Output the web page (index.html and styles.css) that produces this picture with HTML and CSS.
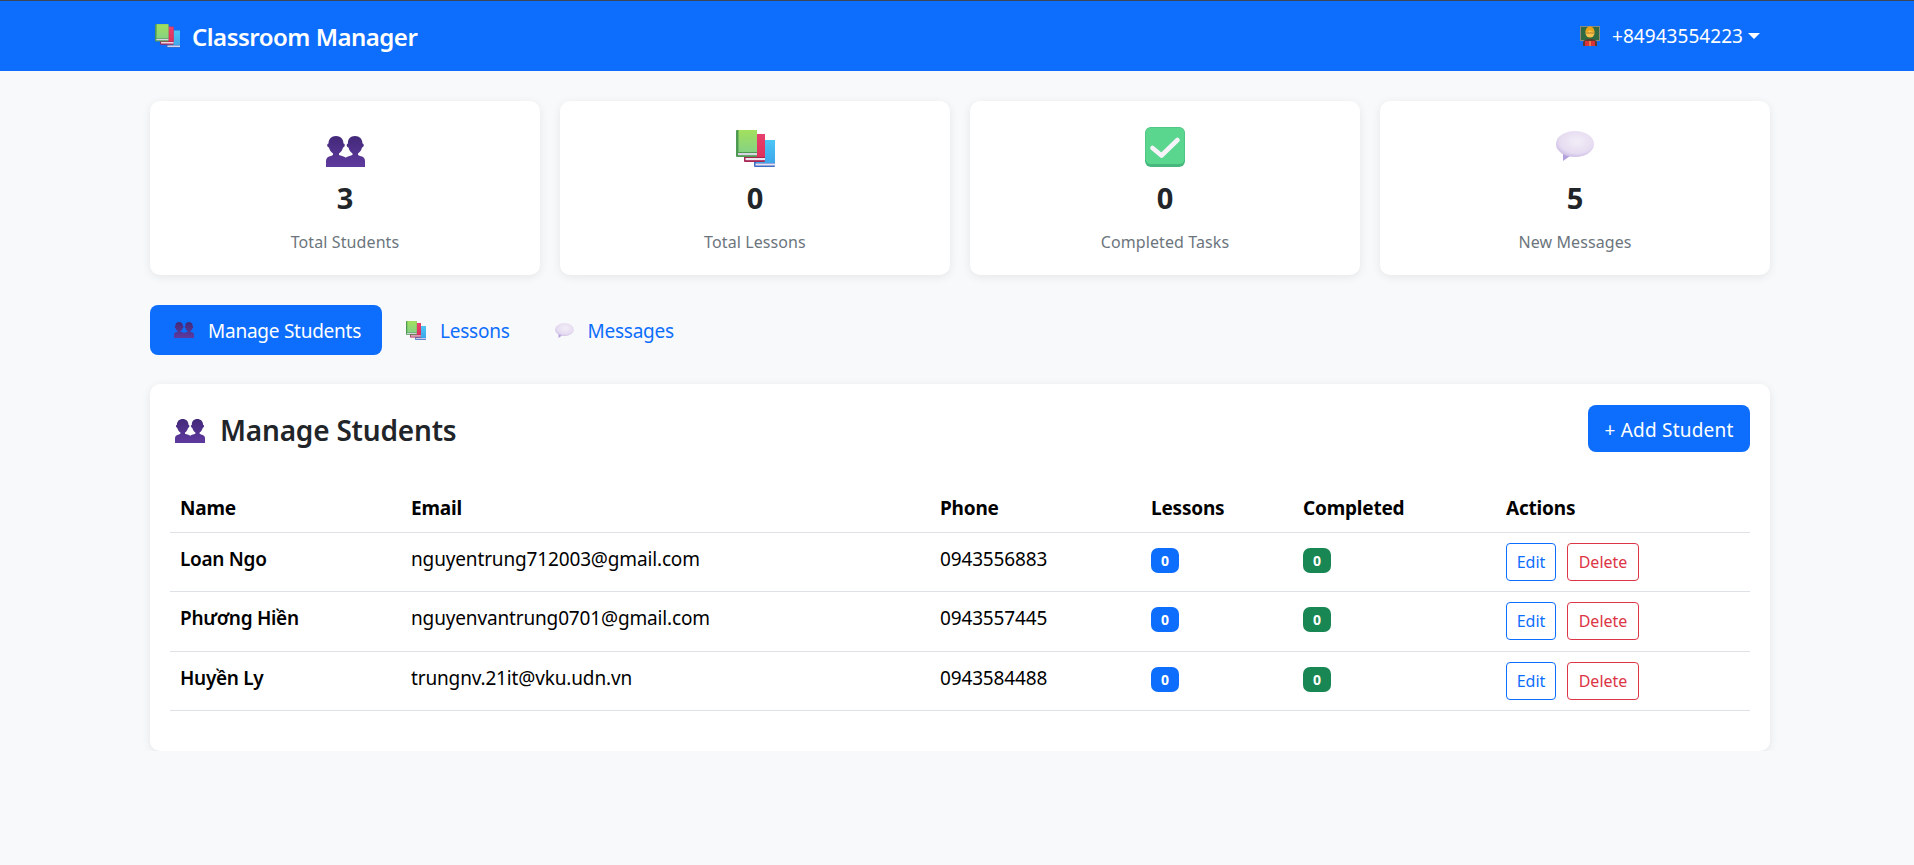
FILE: index.html
```html
<!DOCTYPE html>
<html lang="vi">
<head>
<meta charset="utf-8">
<title>Classroom Manager</title>
<link rel="stylesheet" href="styles.css">
</head>
<body>
<svg class="defs" width="0" height="0" aria-hidden="true">
  <defs>
    <linearGradient id="gp" x1="0" y1="0" x2="0" y2="1"><stop offset="0" stop-color="#43297a"/><stop offset="1" stop-color="#5f3a9e"/></linearGradient>
    <linearGradient id="gg" x1="0" y1="0" x2="0" y2="1"><stop offset="0" stop-color="#a2e05c"/><stop offset="1" stop-color="#86d283"/></linearGradient>
    <linearGradient id="gr" x1="0" y1="0" x2="0" y2="1"><stop offset="0" stop-color="#e8406f"/><stop offset="1" stop-color="#e0305a"/></linearGradient>
    <linearGradient id="gb" x1="0" y1="0" x2="0" y2="1"><stop offset="0" stop-color="#4cc6f6"/><stop offset="1" stop-color="#3fa6ea"/></linearGradient>
    <radialGradient id="gm" cx=".55" cy=".4" r=".65"><stop offset="0" stop-color="#f2edf7"/><stop offset=".7" stop-color="#e6dcf1"/><stop offset="1" stop-color="#c6b6e2"/></radialGradient>
    <symbol id="i-people" viewBox="0 0 39 31">
      <g fill="url(#gp)">
        <path d="M0 31V25c0-3 2-4.500 5-5l2-1v-1.500C5 16 3.500 14 3 11.500 1 11 .5 8 2.500 7.500 2.500 3 5.500 0 10 0s7.500 3 7.500 7.500c2 .5 1.500 3.500-.5 4-.5 2.500-2 4.500-4 6V19l3 1c2 .5 4 1 4 2.500V31z"/>
        <path d="M19.500 31V22.500c0-1.500 2-2 4-2.500l3-1v-1.500c-2-1.500-3.500-3.500-4-6-2-.5-2.500-3.500-.5-4C21.500 3 24.500 0 29 0s7.500 3 7.500 7.500c2 .5 1.500 3.500-.5 4-.5 2.500-2 4.500-4 6V19l2 1c3 .5 5 2 5 5v6z"/>
      </g>
    </symbol>
    <symbol id="i-books" viewBox="0 0 39 37">
      <rect x="18" y="10" width="21" height="27" rx="1" fill="#3f6fc4"/>
      <rect x="20" y="10" width="19" height="23" fill="url(#gb)"/>
      <rect x="19.500" y="33.500" width="19.500" height="2" fill="#e8e2f2"/>
      <rect x="8" y="4" width="21" height="28" rx="1" fill="#a82452"/>
      <rect x="10" y="4" width="19" height="23" fill="url(#gr)"/>
      <rect x="9.500" y="28" width="19.500" height="2.200" fill="#efe5ee"/>
      <rect x="0" y="0" width="21" height="27" rx="1" fill="#4f9a52"/>
      <rect x="2.500" y="0" width="18.500" height="22" fill="url(#gg)"/>
      <rect x="2" y="23" width="19" height="2.200" fill="#d9d5e6"/>
    </symbol>
    <symbol id="i-check" viewBox="0 0 40 40">
      <rect width="40" height="40" rx="6" fill="#46b87d"/>
      <rect x=".5" y=".5" width="39" height="36.500" rx="5.500" fill="#5bd68f"/>
      <path d="M7.500 21l9 7.500L32.500 13" fill="none" stroke="#f6f3f9" stroke-width="4.600" stroke-linecap="round" stroke-linejoin="round"/>
    </symbol>
    <symbol id="i-bubble" viewBox="0 0 38 30">
      <path d="M7 20v10l7-5z" fill="#b3a0dc"/>
      <ellipse cx="19" cy="13" rx="19" ry="13" fill="url(#gm)"/>
    </symbol>
    <symbol id="i-teacher" viewBox="0 0 20 20">
      <rect width="20" height="15" fill="#8d8a7c"/>
      <rect x="1" y="1" width="18" height="13" fill="#2e6b45"/>
      <path d="M3 20v-3c0-3 3-4 7-4s7 1 7 4v3z" fill="#5a3a2e"/>
      <rect x="5" y="15" width="10" height="5" fill="#d8323a"/>
      <rect x="9.500" y="15" width="1" height="5" fill="#f5c24a"/>
      <circle cx="10" cy="7" r="4.500" fill="#f8c24e"/>
      <path d="M5.500 6C5.500 2 8 .5 10 .5S14.500 2 14.500 6c-2 0-3-1-4.500-2-1 1-2.500 2-4.500 2z" fill="#e8a21c"/>
      <rect x="6" y="6.500" width="8" height="1" fill="#b07a20"/>
    </symbol>
  </defs>
</svg>

<header class="navbar">
  <div class="wrap nav-inner">
    <a class="brand" href="#">
      <svg class="ico ico-brand"><use href="#i-books"/></svg>
      <span>Classroom Manager</span>
    </a>
    <a class="user" href="#">
      <svg class="ico ico-user"><use href="#i-teacher"/></svg>
      <span>+84943554223</span>
      <span class="caret"></span>
    </a>
  </div>
</header>

<main class="wrap page">
  <section class="stats">
    <div class="stat">
      <div class="stat-icon"><svg class="ico s-people"><use href="#i-people"/></svg></div>
      <div class="stat-num">3</div>
      <div class="stat-label">Total Students</div>
    </div>
    <div class="stat">
      <div class="stat-icon"><svg class="ico s-books"><use href="#i-books"/></svg></div>
      <div class="stat-num">0</div>
      <div class="stat-label">Total Lessons</div>
    </div>
    <div class="stat">
      <div class="stat-icon"><svg class="ico s-check"><use href="#i-check"/></svg></div>
      <div class="stat-num">0</div>
      <div class="stat-label">Completed Tasks</div>
    </div>
    <div class="stat">
      <div class="stat-icon"><svg class="ico s-bubble"><use href="#i-bubble"/></svg></div>
      <div class="stat-num">5</div>
      <div class="stat-label">New Messages</div>
    </div>
  </section>

  <nav class="tabs">
    <a class="tab active" href="#"><svg class="ico t-people"><use href="#i-people"/></svg><span>Manage Students</span></a>
    <a class="tab" href="#"><svg class="ico t-books"><use href="#i-books"/></svg><span>Lessons</span></a>
    <a class="tab" href="#"><svg class="ico t-bubble"><use href="#i-bubble"/></svg><span>Messages</span></a>
  </nav>

  <section class="panel">
    <div class="panel-head">
      <h2 class="panel-title"><svg class="ico h-people"><use href="#i-people"/></svg><span>Manage Students</span></h2>
      <button class="btn-add">+ Add Student</button>
    </div>
    <table class="table">
      <colgroup>
        <col class="c1"><col class="c2"><col class="c3"><col class="c4"><col class="c5"><col class="c6">
      </colgroup>
      <thead>
        <tr><th>Name</th><th>Email</th><th>Phone</th><th>Lessons</th><th>Completed</th><th>Actions</th></tr>
      </thead>
      <tbody>
        <tr>
          <td class="name">Loan Ngo</td><td>nguyentrung712003@gmail.com</td><td>0943556883</td>
          <td class="bcell"><span class="badge blue">0</span></td><td class="bcell"><span class="badge green">0</span></td>
          <td class="acell"><div class="actions"><button class="btn edit">Edit</button><button class="btn del">Delete</button></div></td>
        </tr>
        <tr>
          <td class="name">Phương Hiền</td><td>nguyenvantrung0701@gmail.com</td><td>0943557445</td>
          <td class="bcell"><span class="badge blue">0</span></td><td class="bcell"><span class="badge green">0</span></td>
          <td class="acell"><div class="actions"><button class="btn edit">Edit</button><button class="btn del">Delete</button></div></td>
        </tr>
        <tr>
          <td class="name">Huyền Ly</td><td>trungnv.21it@vku.udn.vn</td><td>0943584488</td>
          <td class="bcell"><span class="badge blue">0</span></td><td class="bcell"><span class="badge green">0</span></td>
          <td class="acell"><div class="actions"><button class="btn edit">Edit</button><button class="btn del">Delete</button></div></td>
        </tr>
      </tbody>
    </table>
  </section>
</main>
</body>
</html>
```
FILE: styles.css
```css
* { box-sizing: border-box; }
html, body { margin: 0; padding: 0; }
body {
  background: #f8f9fa;
  color: #212529;
  font-family: "Noto Sans", "Open Sans", sans-serif;
  font-size: 19px;
  line-height: 27px;
  overflow-x: hidden;
}
.defs { position: absolute; }
a { text-decoration: none; color: inherit; }
.ico { display: block; flex: none; }
.wrap { width: 1620px; margin-left: 150px; }

.navbar {
  height: 71px;
  background: #0d6efd;
  border-top: 1px solid #3b4656;
}
.nav-inner {
  height: 70px;
  display: flex;
  align-items: center;
  justify-content: space-between;
  padding: 0 10px 0 5px;
}
.brand {
  display: flex;
  align-items: center;
  gap: 12px;
  color: #fff;
  font-size: 24px;
  font-weight: 600;
  letter-spacing: -.5px;
}
.ico-brand { width: 25px; height: 24px; }
.user {
  display: flex;
  align-items: center;
  color: #fff;
  font-size: 19px;
  letter-spacing: .05px;
}
.ico-user { width: 20px; height: 20px; margin-right: 12px; }
.caret {
  margin-left: 5px;
  margin-bottom: 1px;
  border-top: 6px solid #fff;
  border-left: 6px solid transparent;
  border-right: 6px solid transparent;
}

.page { padding-top: 30px; }
.stats {
  display: grid;
  grid-template-columns: repeat(4, 390px);
  gap: 20px;
}
.stat {
  height: 174px;
  background: #fff;
  border-radius: 10px;
  box-shadow: 0 2px 10px rgba(0, 0, 0, .08);
  display: flex;
  flex-direction: column;
  align-items: center;
  padding-top: 26px;
}
.stat-icon { height: 40px; display: flex; align-items: flex-end; }
.s-people { width: 39px; height: 31px; }
.s-books { width: 39px; height: 37px; }
.s-check { width: 40px; height: 40px; }
.s-bubble { width: 38px; height: 30px; margin-bottom: 6px; }
.stat-num {
  margin-top: 11px;
  font-size: 29px;
  line-height: 40px;
  font-weight: 700;
}
.stat-label {
  margin-top: 12px;
  font-size: 16px;
  line-height: 24px;
  color: #6c757d;
  letter-spacing: .1px;
}

.tabs { display: flex; margin-top: 30px; }
.tab {
  display: flex;
  align-items: center;
  height: 50px;
  padding: 2px 21px 0 24px;
  border-radius: 8px;
  color: #0d6efd;
  letter-spacing: -.25px;
}
.tab.active { background: #0d6efd; color: #fff; }
.tab .ico { margin-top: -2px; }
.t-people { width: 20px; height: 16px; margin-right: 14px; }
.t-books { width: 20px; height: 19px; margin-right: 14px; }
.t-bubble { width: 19px; height: 15px; margin-right: 14px; }

.panel {
  margin-top: 29px;
  height: 367px;
  background: #fff;
  border-radius: 10px;
  box-shadow: 0 2px 10px rgba(0, 0, 0, .08);
  padding: 21px 20px 0;
}
.panel-head {
  display: flex;
  justify-content: space-between;
  align-items: flex-start;
  height: 78px;
}
.panel-title {
  margin: 0;
  height: 47px;
  display: flex;
  align-items: center;
  padding: 4px 0 0 5px;
  font-size: 28px;
  font-weight: 600;
  letter-spacing: -.2px;
}
.h-people { width: 30px; height: 24px; margin-right: 15px; margin-top: 1px; }
.btn-add {
  width: 162px;
  height: 47px;
  border: 0;
  border-radius: 8px;
  background: #0d6efd;
  color: #fff;
  font: inherit;
  letter-spacing: .2px;
  padding: 3px 0 0;
}

.table { width: 1580px; border-collapse: collapse; table-layout: fixed; color: #000; }
.c1 { width: 231px; }
.c2 { width: 528px; }
.c3 { width: 211px; }
.c4 { width: 152px; }
.c5 { width: 203px; }
.c6 { width: 255px; }
.table th {
  text-align: left;
  font-weight: 700;
  height: 49px;
  padding: 2px 11px 0;
  border-bottom: 1px solid #dee2e6;
  letter-spacing: -.2px;
}
.table td {
  height: 59px;
  padding: 13px 11px 0;
  border-bottom: 1px solid #dee2e6;
  vertical-align: top;
  letter-spacing: -.15px;
}
.table th:nth-child(-n+2), .table td:nth-child(-n+2) { padding-left: 10px; }
.table tr:nth-child(2) td { height: 60px; }
.table td.name { font-weight: 600; letter-spacing: -.3px; }
.table td.bcell { padding-top: 15px; }
.table td.acell { padding-top: 10px; }
.badge {
  display: block;
  width: 28px;
  height: 25px;
  border-radius: 7px;
  color: #fff;
  font-size: 14px;
  font-weight: 700;
  line-height: 25px;
  text-align: center;
  letter-spacing: 0;
}
.blue { background: #0d6efd; }
.green { background: #198754; }
.actions { display: flex; gap: 11px; }
.btn {
  height: 38px;
  padding: 0;
  background: #fff;
  border: 1px solid;
  border-radius: 4px;
  font-family: inherit;
  font-size: 16px;
}
.edit { width: 50px; color: #0d6efd; border-color: #0d6efd; }
.del { width: 72px; color: #dc3545; border-color: #dc3545; }
```
